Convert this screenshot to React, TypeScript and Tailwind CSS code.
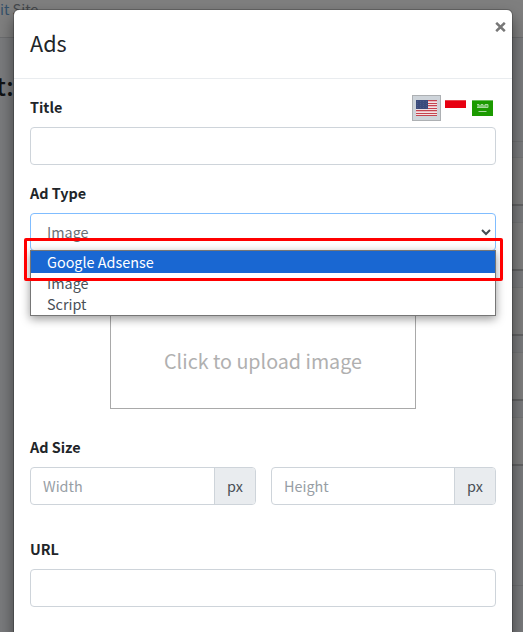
import React from "react";

const field = "h-[38px] w-full rounded border border-[#ced4da] bg-white";

function Label({ children }: { children: React.ReactNode }) {
  return <div className="h-6 text-[14.4px] leading-6 font-bold text-[#212529]">{children}</div>;
}

function UsFlag() {
  return (
    <svg width="21" height="16" viewBox="0 0 21 16" shapeRendering="crispEdges">
      <rect width="21" height="16" fill="#f1e2e4" />
      {[0, 3, 5, 8, 10, 13, 15].map((y) => (
        <rect key={y} y={y} width="21" height="1" fill="#c5434f" />
      ))}
      {[1, 6, 11].map((y) => (
        <rect key={y} y={y} width="21" height="1" fill="#e9b9be" />
      ))}
      <rect width="12" height="9" fill="#3b4b7c" />
      {[1, 3, 5, 7].map((y) =>
        [1, 4, 7, 10].map((x) => <rect key={`${x}-${y}`} x={x} y={y} width="1" height="1" fill="#485887" />),
      )}
    </svg>
  );
}

function SaudiFlag() {
  return (
    <svg width="21" height="16" viewBox="0 0 21 16">
      <rect width="21" height="16" fill="#1b9a00" />
      <rect width="21" height="1" fill="#6fbf60" />
      <path d="M5 4.500h2v3h2v-3h2v3h2v-3h3v3H5M5 6h11" fill="none" stroke="#a5d89c" strokeWidth="1" />
      <path d="M6.500 11.500h8" stroke="#a5d89c" strokeWidth="1" />
    </svg>
  );
}

function SizeField({ text, width }: { text: string; width: string }) {
  return (
    <div className={`flex h-[38px] overflow-hidden rounded border border-[#ced4da] text-[14.4px] leading-9 ${width}`}>
      <div className="flex-1 pl-3 text-[#979ea5]">{text}</div>
      <div className="w-[41px] border-l border-[#ced4da] bg-[#e9ecef] text-center text-[#495057]">px</div>
    </div>
  );
}

function Backdrop() {
  return (
    <div className="absolute inset-0 bg-[#7a7b7d]">
      <div className="h-[38px] border-b border-[#6c6d6f] bg-[#7f7f7f] text-[14.4px] leading-[18px] text-[#44484c]">
        <span className="text-[#34506a]">it</span> Site
      </div>
      <div className="h-[103px] pt-[29px] text-[25px] leading-9 font-medium text-[#101214]">
        <span className="-ml-[4px]">t:</span>
      </div>
      <div className="ml-auto flex h-[445px] w-4 flex-col gap-4 border-y border-[#707173] pt-[15px]">
        {[0, 1, 2, 3, 4].map((i) => (
          <div key={i} className="h-[49px] shrink-0 border-t border-b-2 border-t-[#747576] border-b-[#636465] bg-[#7f7f7f]" />
        ))}
      </div>
    </div>
  );
}

export default function App() {
  return (
    <div className="relative h-[632px] w-[523px] overflow-hidden font-['Noto_Sans_CJK_SC',sans-serif]">
      <Backdrop />
      <div className="absolute top-[10px] left-[14px] h-[660px] w-[498px] rounded-t-[5px] bg-white shadow-[0_0_0_1px_rgba(0,0,0,0.2),0_8px_16px_rgba(0,0,0,0.5)]">
        <div className="flex h-[69px] justify-between border-b border-[#e9ecef] pl-4">
          <div className="pt-4 text-[21.6px] leading-[34px] text-[#212529]">Ads</div>
          <svg className="mt-3 mr-[6px]" width="11" height="10" viewBox="0 0 11 10">
            <path d="M1.200 0.800 9.800 9.200M9.800 0.800 1.200 9.200" stroke="#777" strokeWidth="2.500" />
          </svg>
        </div>
        <div className="px-4 pt-4">
          <div className="flex h-8 justify-between">
            <Label>Title</Label>
            <div className="flex items-start pr-[3px]">
              <div className="flex h-[26px] w-[29px] items-center justify-center border border-[#adb0b3] bg-[#ced4da]">
                <UsFlag />
              </div>
              <div className="mt-[5px] ml-1 h-2 w-[21px] border-t border-[#e84850] bg-[#e70011]" />
              <div className="mt-[5px] ml-[6px]">
                <SaudiFlag />
              </div>
            </div>
          </div>
          <div className={field} />
          <div className="mt-4 h-8">
            <Label>Ad Type</Label>
          </div>
          <div className="relative">
            <div className="flex h-[38px] items-center justify-between rounded border border-[#80bdff] pr-1 pl-4 text-[14.4px] text-[#6a7076]">
              <span>Image</span>
              <svg width="10" height="7" viewBox="0 0 10 7">
                <path d="m1 1 4 4 4-4" fill="none" stroke="#444b52" strokeWidth="2" />
              </svg>
            </div>
            <div className="absolute top-[37px] left-0 z-10 h-[66px] w-[466px] border border-[#767676] bg-white text-[14.4px] leading-[19px] text-[#495057] shadow-[0_3px_9px_rgba(0,0,0,0.4)]">
              <div className="h-[22px] bg-[#1967d2] pl-4 leading-[21px] text-white">Google Adsense</div>
              <div className="h-[21px] pl-4">Image</div>
              <div className="h-[21px] pl-4">Script</div>
            </div>
            <div className="absolute top-[25px] -left-[6px] z-20 h-[43px] w-[479px] rounded-[2px] border-[3px] border-[#ff0000]" />
          </div>
          <div className="mx-auto mt-[37px] flex h-[121px] w-[306px] justify-center border border-[#a9a9a9] pt-[54px] text-[19.7px] leading-9 text-[#b0b0b0]">
            Click to upload image
          </div>
          <div className="mt-[26px] h-8">
            <Label>Ad Size</Label>
          </div>
          <div className="flex justify-between">
            <SizeField text="Width" width="w-[226px]" />
            <SizeField text="Height" width="w-[225px]" />
          </div>
          <div className="mt-8 h-8">
            <Label>URL</Label>
          </div>
          <div className={field} />
        </div>
      </div>
    </div>
  );
}
